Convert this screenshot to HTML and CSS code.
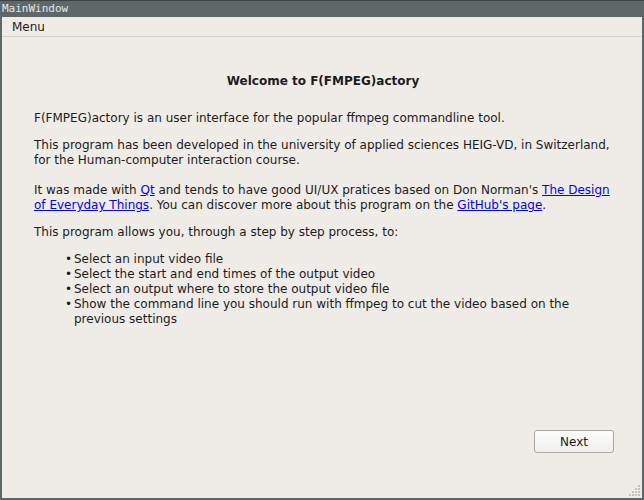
FILE: index.html
```html
<!DOCTYPE html>
<html>
<head>
<meta charset="utf-8">
<link rel="stylesheet" href="styles.css">
</head>
<body>
<div class="window">
  <div class="titlebar">MainWindow</div>
  <div class="frame">
    <div class="client">
      <div class="menubar"><span class="menu-item">Menu</span></div>
      <div class="content">
        <h1 class="heading">Welcome to F(FMPEG)actory</h1>
        <p class="para">F(FMPEG)actory is an user interface for the popular ffmpeg commandline tool.</p>
        <p class="para">This program has been developed in the university of applied sciences HEIG-VD, in Switzerland,<br>for the Human-computer interaction course.</p>
        <p class="para gap">It was made with <a href="#">Qt</a> and tends to have good UI/UX pratices based on Don Norman's <a href="#">The Design<br>of Everyday Things</a>. You can discover more about this program on the <a href="#">GitHub's page</a>.</p>
        <p class="para">This program allows you, through a step by step process, to:</p>
        <ul class="steps">
          <li>Select an input video file</li>
          <li>Select the start and end times of the output video</li>
          <li>Select an output where to store the output video file</li>
          <li>Show the command line you should run with ffmpeg to cut the video based on the previous settings</li>
        </ul>
      </div>
      <div class="footer">
        <button class="btn">Next</button>
      </div>
      <svg class="grip" width="11" height="11" viewBox="0 0 11 11">
        <g fill="#c4c0ba">
          <rect x="9" y="0" width="2" height="2"/>
          <rect x="6" y="3" width="2" height="2"/><rect x="9" y="3" width="2" height="2"/>
          <rect x="3" y="6" width="2" height="2"/><rect x="6" y="6" width="2" height="2"/><rect x="9" y="6" width="2" height="2"/>
          <rect x="0" y="9" width="2" height="2"/><rect x="3" y="9" width="2" height="2"/><rect x="6" y="9" width="2" height="2"/><rect x="9" y="9" width="2" height="2"/>
        </g>
      </svg>
    </div>
  </div>
</div>
</body>
</html>
```
FILE: styles.css
```css
html, body {
  margin: 0;
  padding: 0;
  background: #5f6868;
}
.window {
  width: 644px;
  height: 500px;
  display: flex;
  flex-direction: column;
  background: #5f6868;
  border-top: 1px solid #3c4242;
  box-sizing: border-box;
}
.titlebar {
  height: 16px;
  line-height: 15px;
  padding-left: 2px;
  font-family: "DejaVu Sans Mono", monospace;
  font-size: 11px;
  color: #e4e6e6;
}
.frame {
  flex: 1;
  padding: 0 2px 2px 2px;
  display: flex;
}
.client {
  flex: 1;
  background: #efebe7;
  display: flex;
  flex-direction: column;
  position: relative;
  font-family: "DejaVu Sans", sans-serif;
  font-size: 12px;
  color: #1c1c1c;
}
.menubar {
  height: 20px;
  border-bottom: 1px solid #d6d2cc;
  display: flex;
  align-items: center;
  padding-top: 1px;
  box-sizing: border-box;
}
.menu-item {
  padding-left: 10px;
  font-size: 12px;
}
.content {
  padding: 0 30px 0 32px;
  flex: 1;
}
.heading {
  margin: 37px 0 22px 0;
  text-align: center;
  font-size: 12px;
  font-weight: bold;
  line-height: 15px;
}
.para {
  margin: 0 0 12px 0;
  line-height: 15px;
}
.para.gap {
  margin-top: 15px;
}
a {
  color: #0000ff;
  text-decoration: underline;
}
.steps {
  margin: 0;
  padding-left: 40px;
  list-style: none;
}
.steps li {
  position: relative;
  line-height: 15px;
}
.steps li::before {
  content: "\2022";
  position: absolute;
  left: -9px;
}
.footer {
  display: flex;
  justify-content: flex-end;
  padding: 0 28px 45px 0;
}
.btn {
  width: 80px;
  height: 23px;
  border: 1px solid #a9a7a4;
  border-radius: 3px;
  background: linear-gradient(#fdfdfd, #efeeec);
  font-family: "DejaVu Sans", sans-serif;
  font-size: 12px;
  color: #1c1c1c;
  padding: 0;
}
.grip {
  position: absolute;
  right: 2px;
  bottom: 2px;
}
```
